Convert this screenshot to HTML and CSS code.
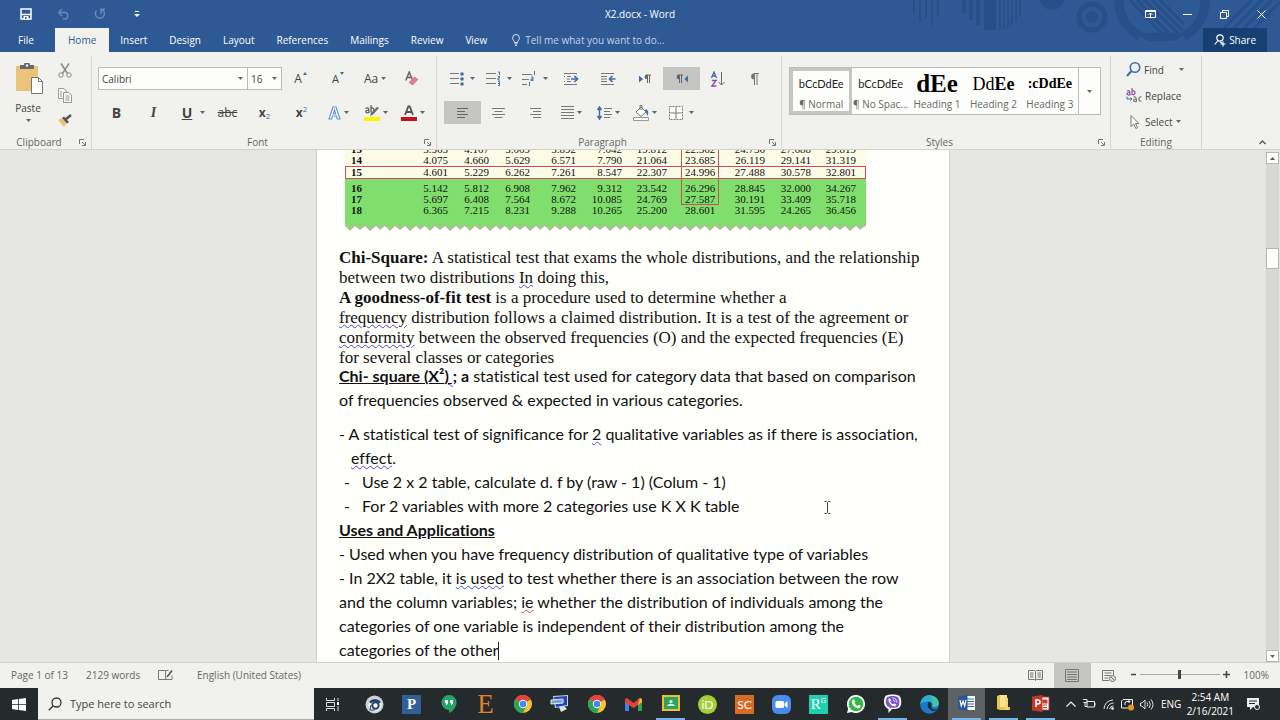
FILE: index.html
```html
<!DOCTYPE html>
<html lang="en">
<head>
<meta charset="utf-8">
<title>X2.docx - Word</title>
<link rel="stylesheet" href="styles.css">
</head>
<body>
<svg class="defs" aria-hidden="true">
  <symbol id="caret" viewBox="0 0 5 3"><path d="M0 0h5L2.500 3z" fill="#666"/></symbol>
  <symbol id="launch" viewBox="0 0 7 7"><path d="M.5 5V.5H5M3 3l3 3M6.500 3v3.500H3" fill="none" stroke="#777"/></symbol>
  <symbol id="chrome" viewBox="0 0 18 18"><circle cx="9" cy="9" r="9" fill="#f4c62c"/><path d="M9 9L1.200 4.500A9 9 0 0 1 16.800 4.500z" fill="#e0443a"/><path d="M9 9L1.200 4.500A9 9 0 0 0 9 18L12.500 11z" fill="#2fa456"/><path d="M9 5h8.200l-.4-.5H9z" fill="#e0443a"/><circle cx="9" cy="9" r="4.200" fill="#fff"/><circle cx="9" cy="9" r="3.300" fill="#4587ee"/></symbol>
</svg>

<header class="top">
  <svg class="art" viewBox="0 0 380 52" aria-hidden="true">
    <g fill="#274f8a">
      <path d="M13 0h2v14h-2zM19 0h2v22h-2zM25 0h2v18h-2zM31 0h2v27h-2zM37 0h2v16h-2z"/>
      <path d="M62 0h4v13h-4zM69 0h4v20h-4zM76 0h4v25h-4zM84 0h12v30h-12zM99 0h2v30h-2zM103 0h2v29h-2zM107 0h2v28h-2zM111 0h2v25h-2zM115 0h2v21h-2zM119 0h2v16h-2z"/>
      <path d="M140 0h24c-2 13-22 13-24 0z"/>
      <circle cx="192" cy="17" r="6"/>
    </g>
    <circle cx="192" cy="17" r="13" fill="none" stroke="#274f8a" stroke-width="5"/>
    <path d="M240 36C222 26 218 10 219-4M284 36C302 26 306 10 305-4" fill="none" stroke="#274f8a" stroke-width="9"/>
    <path d="M236 33h52l-14 8h-26z" fill="#274f8a"/>
    <path d="M230 0l34 36M237 0l34 36M244 0l34 33M252 0l30 30M260 0l24 24" stroke="#274f8a" stroke-width="3"/>
    <path d="M324 28L352 0M334 28L362 0M344 28L372 0M354 28L380 2" stroke="#274f8a" stroke-width="3"/>
  </svg>
  <div class="titlebar">
    <div class="qat">
      <button aria-label="Save"><svg width="12" height="12" viewBox="0 0 12 12"><path d="M1 1h10v10H1zM1 6.500h10" fill="none" stroke="#fff" stroke-width="1.500"/><path d="M3.500 8h5v4h-5z" fill="#fff"/><path d="M5 9h1.500v2H5z" fill="#2e5995"/></svg></button>
      <button aria-label="Undo"><svg width="12" height="12" viewBox="0 0 12 12"><path d="M5 1L1.500 4.500 5 8M2 4.500h5.500a3 3 0 0 1 0 6.500H6" fill="none" stroke="#6488bd" stroke-width="1.500"/></svg></button>
      <button aria-label="Repeat"><svg width="12" height="12" viewBox="0 0 12 12"><path d="M7 1.200A4.600 4.600 0 1 1 2.500 2.500M7 6V1.200h4" fill="none" stroke="#6488bd" stroke-width="1.500"/></svg></button>
      <button aria-label="Customize Quick Access Toolbar"><svg width="6" height="6" viewBox="0 0 6 6"><path d="M1 0h4v1H1zM0 3h6L3 6z" fill="#fff"/></svg></button>
    </div>
    <span class="doc-name">X2.docx - Word</span>
    <div class="window-buttons">
      <button aria-label="Ribbon Display Options"><svg width="11" height="8" viewBox="0 0 11 8"><path d="M.5.5h10v7H.5zM.5 1.500h10M5.500 7V3M3.500 5l2-2 2 2" fill="none" stroke="#fff"/></svg></button>
      <button aria-label="Minimize"><svg width="9" height="9" viewBox="0 0 9 9"><path d="M0 4.500h9" stroke="#fff"/></svg></button>
      <button aria-label="Restore"><svg width="9" height="9" viewBox="0 0 9 9"><path d="M.5 2.500h6v6h-6zM2.500 2V.5h6v6H7" fill="none" stroke="#fff"/></svg></button>
      <button aria-label="Close"><svg width="9" height="9" viewBox="0 0 9 9"><path d="M.5.5l8 8M8.500.5l-8 8" stroke="#fff"/></svg></button>
    </div>
  </div>
  <nav class="tabs">
    <button class="file">File</button>
    <button class="active">Home</button>
    <button>Insert</button>
    <button>Design</button>
    <button>Layout</button>
    <button>References</button>
    <button>Mailings</button>
    <button>Review</button>
    <button>View</button>
    <label class="tell"><svg width="8" height="12" viewBox="0 0 8 12"><path d="M2.500 8.500C2.500 7 .6 6 .6 3.900a3.400 3.400 0 0 1 6.800 0C7.400 6 5.500 7 5.500 8.500zM2.500 9.800h3M3 11.400h2" fill="none" stroke="#dce6f3"/></svg><input type="text" placeholder="Tell me what you want to do..." aria-label="Tell me what you want to do"></label>
    <button class="share"><svg width="12" height="13" viewBox="0 0 12 13"><circle cx="6" cy="4" r="3.200" fill="none" stroke="#fff" stroke-width="1.200"/><path d="M4 6.500L.8 10.500M6 8l2 1M9 7.500v5M6.500 10h5" fill="none" stroke="#fff" stroke-width="1.200"/></svg>Share</button>
  </nav>
</header>

<section class="ribbon" aria-label="Home ribbon">
  <div class="group clipboard">
    <div class="body">
      <button class="paste"><svg width="28" height="32" viewBox="0 0 28 32"><path d="M0 3h22v25H0z" fill="#e9c47a"/><path d="M4 6V2h4a3 3 0 0 1 6 0h4v4z" fill="#6a6a6a"/><circle cx="11" cy="2.500" r="1.200" fill="#f1f2ee"/><path d="M15.500 14.500h7l4 4v12h-11z" fill="#fff" stroke="#777"/><path d="M22.500 14.500v4h4" fill="none" stroke="#777"/></svg><span>Paste</span><svg class="caret"><use href="#caret"/></svg></button>
      <div class="small-stack">
        <button aria-label="Cut"><svg width="14" height="15" viewBox="0 0 14 15"><path d="M3 .5l6.500 10M11 .5L4.500 10.500" stroke="#8a8a8a" stroke-width="1.500"/><circle cx="3" cy="12" r="2.200" fill="none" stroke="#8a8a8a"/><circle cx="11" cy="12" r="2.200" fill="none" stroke="#8a8a8a"/></svg></button>
        <button aria-label="Copy"><svg width="14" height="15" viewBox="0 0 14 15"><path d="M.5.5H6L8.500 3v7.500h-8z" fill="#f6f6f6" stroke="#9a9a9a"/><path d="M5.500 4.500H11L13.500 7v7.500h-8z" fill="#f6f6f6" stroke="#9a9a9a"/><path d="M2 4h2M2 6h2M2 8h2M7.500 8h4M7.500 10h4M7.500 12h4" stroke="#9a9a9a"/></svg></button>
        <button aria-label="Format Painter"><svg width="14" height="13" viewBox="0 0 14 13"><path d="M0 6l4-2 5 5-3 4z" fill="#e9c47a"/><path d="M4 4l2-1.500L11 8 9 9.500z" fill="#555"/><path d="M7.500 5.500L13 1" stroke="#555" stroke-width="2.500"/></svg></button>
      </div>
    </div>
    <div class="caption">Clipboard<button aria-label="Clipboard settings"><svg width="7" height="7"><use href="#launch"/></svg></button></div>
  </div>

  <div class="group font">
    <div class="body rows">
      <div class="row">
        <div class="combo wide"><input type="text" value="Calibri" aria-label="Font"><svg class="caret"><use href="#caret"/></svg></div>
        <div class="combo size"><input type="text" value="16" aria-label="Font size"><svg class="caret"><use href="#caret"/></svg></div>
        <div class="cells four">
          <button class="glyph" aria-label="Grow font">A<svg class="tip" width="4" height="3" viewBox="0 0 4 3"><path d="M0 3h4L2 0z" fill="#3d6cab"/></svg></button>
          <button class="glyph shrink" aria-label="Shrink font">A<svg class="tip" width="4" height="3" viewBox="0 0 4 3"><path d="M0 0h4L2 3z" fill="#3d6cab"/></svg></button>
          <button class="glyph" aria-label="Change case">Aa<svg class="caret"><use href="#caret"/></svg></button>
          <button aria-label="Clear formatting"><svg width="14" height="15" viewBox="0 0 14 15"><path d="M.8 9.500L4.200 1l3.300 8M2 6.500h4.500" fill="none" stroke="#666" stroke-width="1.500"/><path d="M3.500 11.500l6-6 4 3-6 6z" fill="#dc7f93"/></svg></button>
        </div>
      </div>
      <div class="row">
        <div class="cells nine-font">
          <button class="glyph big"><b>B</b></button>
          <button class="glyph big serif"><b><i>I</i></b></button>
          <button class="glyph big under"><u><b>U</b></u><svg class="caret gap"><use href="#caret"/></svg></button>
          <button class="glyph"><s>abc</s></button>
          <button class="glyph"><b>x</b><sub>2</sub></button>
          <button class="glyph"><b>x</b><sup>2</sup></button>
          <button aria-label="Text effects"><svg width="13" height="14" viewBox="0 0 13 14"><path d="M1 13L5 1h3l4 12H9.300L8.500 10h-4l-.9 3zM5.200 8h2.600L6.500 4z" fill="#fff" stroke="#5b93cd" stroke-width="1.100"/></svg><svg class="caret"><use href="#caret"/></svg></button>
          <button aria-label="Text highlight color"><svg width="16" height="16" viewBox="0 0 16 16"><path d="M1.500 3.500c3-1.500 3.500 0 3.500 4-4 1.500-4.500-2.500 0-2.500M7 0v7c4 1.500 4-5 0-4" fill="none" stroke="#555" stroke-width="1.200"/><path d="M15 3L9 9.500 6 11l1-3L13 2z" fill="#666"/><path d="M0 12h16v4H0z" fill="#fdf400"/></svg><svg class="caret"><use href="#caret"/></svg></button>
          <button aria-label="Font color"><svg width="16" height="16" viewBox="0 0 16 16"><path d="M4 10L7.300 1.500h1.400L12 10M5.300 7h5.400" fill="none" stroke="#555" stroke-width="1.800"/><path d="M0 12h16v4H0z" fill="#c8101c"/></svg><svg class="caret"><use href="#caret"/></svg></button>
        </div>
      </div>
    </div>
    <div class="caption">Font<button aria-label="Font settings"><svg width="7" height="7"><use href="#launch"/></svg></button></div>
  </div>

  <div class="group paragraph">
    <div class="body rows">
      <div class="cells nine">
        <button aria-label="Bullets"><svg width="14" height="14" viewBox="0 0 14 14"><path d="M0 1.500h9M0 6.500h9M0 11.500h9" stroke="#777"/><g fill="#3d6cab"><circle cx="12" cy="2" r="1.800"/><circle cx="12" cy="7" r="1.800"/><circle cx="12" cy="12" r="1.800"/></g></svg><svg class="caret list"><use href="#caret"/></svg></button>
        <button aria-label="Numbering"><svg width="15" height="15" viewBox="0 0 15 15"><path d="M0 2.500h10M0 7.500h10M0 12.500h10" stroke="#777"/><path d="M12 1h1.500v3M12 5.500h1.500v1.500H12V9h2M12 10.500h1.500v4H12M12 12.500h1.500" fill="none" stroke="#3d6cab"/></svg><svg class="caret list"><use href="#caret"/></svg></button>
        <button aria-label="Multilevel list"><svg width="15" height="15" viewBox="0 0 15 15"><path d="M0 3.500h10M0 8.500h7M0 13.500h5" stroke="#777"/><path d="M12.500 0v4M9 6h2v3.500H9V8h2M7.500 11v4" fill="none" stroke="#3d6cab"/></svg><svg class="caret list"><use href="#caret"/></svg></button>
        <button aria-label="Decrease indent"><svg width="15" height="12" viewBox="0 0 15 12"><path d="M0 .5h13M0 11.500h13M3 3.500h4M3 6h3M3 8.500h4M0 3.500h1M0 8.500h1" stroke="#777"/><path d="M7 6h6M10.500 3l3 3-3 3" fill="none" stroke="#3d6cab" stroke-width="1.700"/></svg></button>
        <button aria-label="Increase indent"><svg width="15" height="12" viewBox="0 0 15 12"><path d="M0 .5h13M0 11.500h13M0 3.500h6M0 6h6M0 8.500h6" stroke="#777"/><path d="M8.500 6h6M11.500 3l-3 3 3 3" fill="none" stroke="#3d6cab" stroke-width="1.700"/></svg></button>
        <button aria-label="Left-to-right"><svg width="12" height="10" viewBox="0 0 12 10"><path d="M0 1.500L4 5 0 8.500z" fill="#3d6cab"/><path d="M7 1h5M8.500 1v8M10.500 1v8" stroke="#666"/><path d="M8 .5a2.300 2.300 0 0 0 0 4.800z" fill="#666"/></svg></button>
        <button class="on" aria-label="Right-to-left" aria-pressed="true"><svg width="12" height="10" viewBox="0 0 12 10"><path d="M12 1.500L8.500 5 12 8.500z" fill="#3d6cab"/><path d="M2 1h5M3.500 1v8M5.500 1v8" stroke="#666"/><path d="M3 .5a2.300 2.300 0 0 0 0 4.800z" fill="#666"/></svg></button>
        <button aria-label="Sort"><svg width="14" height="16" viewBox="0 0 14 16"><path d="M.5 7L3 1l2.500 6M1.300 5h3.400" fill="none" stroke="#3d6cab" stroke-width="1.300"/><path d="M.8 9.500h4.400L.8 15h4.700" fill="none" stroke="#8a4da0" stroke-width="1.300"/><path d="M10.500 1v13M7.500 11l3 3 3-3" fill="none" stroke="#666"/></svg></button>
        <button aria-label="Show formatting marks"><svg width="9" height="12" viewBox="0 0 9 12"><path d="M3.500.5H9M4.500.5V12M7 .5V12" stroke="#777"/><path d="M4 .5a2.800 2.800 0 0 0 0 5.800z" fill="#777"/></svg></button>
      </div>
      <div class="cells nine">
        <button class="on" aria-label="Align left" aria-pressed="true"><svg width="11" height="10" viewBox="0 0 11 10"><path d="M0 .5h11M0 3.500h8M0 6.500h11M0 9.500h8" stroke="#666"/></svg></button>
        <button aria-label="Center"><svg width="13" height="10" viewBox="0 0 13 10"><path d="M0 .5h13M2.500 3.500h8M0 6.500h13M2.500 9.500h8" stroke="#777"/></svg></button>
        <button aria-label="Align right"><svg width="11" height="10" viewBox="0 0 11 10"><path d="M0 .5h11M3 3.500h8M0 6.500h11M3 9.500h8" stroke="#777"/></svg></button>
        <button aria-label="Justify"><svg width="13" height="13" viewBox="0 0 13 13"><path d="M0 .5h13M0 3.500h13M0 6.500h13M0 9.500h13M0 12.500h13" stroke="#777"/></svg><svg class="caret"><use href="#caret"/></svg></button>
        <button aria-label="Line spacing"><svg width="15" height="14" viewBox="0 0 15 14"><path d="M2.500 2v10M.5 4l2-3 2 3M.5 10l2 3 2-3" fill="none" stroke="#3d6cab" stroke-width="1.500"/><path d="M7 2.500h8M7 5.500h6M7 8.500h8M7 11.500h6" stroke="#777"/></svg><svg class="caret"><use href="#caret"/></svg></button>
        <button aria-label="Shading"><svg width="16" height="16" viewBox="0 0 16 16"><path d="M3 7l5-5 5 5-5 4.500z" fill="#fff" stroke="#777"/><path d="M7 5V.5h2V5" fill="none" stroke="#777"/><path d="M13 4c3 2 2.500 5 1.500 7-1-2-.5-3-2.500-5z" fill="#3d6cab"/><path d="M.5 12.500h15v3H.5z" fill="#fff" stroke="#999"/></svg><svg class="caret"><use href="#caret"/></svg></button>
        <button aria-label="Borders"><svg width="14" height="14" viewBox="0 0 14 14"><path d="M.5.5h13v13H.5z" fill="#fff" stroke="#777" stroke-dasharray="2 1"/><path d="M7 1v12M1 7h12" stroke="#777"/></svg><svg class="caret list"><use href="#caret"/></svg></button>
      </div>
    </div>
    <div class="caption">Paragraph<button aria-label="Paragraph settings"><svg width="7" height="7"><use href="#launch"/></svg></button></div>
  </div>

  <div class="group styles">
    <div class="body">
      <div class="gallery">
        <button class="chosen"><span class="sample">bCcDdEe</span><span>¶ Normal</span></button>
        <button><span class="sample">bCcDdEe</span><span>¶ No Spac...</span></button>
        <button><span class="sample h1">dEe</span><span>Heading 1</span></button>
        <button><span class="sample h2">Dd<b>Ee</b></span><span>Heading 2</span></button>
        <button><span class="sample h3">:cDdEe</span><span>Heading 3</span></button>
        <button class="more" aria-label="More styles"><svg class="caret"><use href="#caret"/></svg></button>
      </div>
    </div>
    <div class="caption">Styles<button aria-label="Styles settings"><svg width="7" height="7"><use href="#launch"/></svg></button></div>
  </div>

  <div class="group editing">
    <div class="body">
      <button><svg width="15" height="15" viewBox="0 0 15 15"><circle cx="9" cy="5.500" r="4.700" fill="none" stroke="#3d6cab" stroke-width="1.600"/><path d="M5.500 9L1 14" stroke="#3d6cab" stroke-width="2"/></svg>Find<svg class="caret far"><use href="#caret"/></svg></button>
      <button><svg width="16" height="15" viewBox="0 0 16 15"><path d="M1 3c2-1 3 0 3 4-4 .5-4-2.500 0-2.500M6 0v6.500c4 1 4-4.500 0-3.500" fill="none" stroke="#8a4da0" stroke-width="1.200"/><path d="M1 8.500V11h5M4.500 9.500L6 11l-1.500 1.500" fill="none" stroke="#3d6cab"/><path d="M7.500 9c2-.5 3 0 3 4.500-4 .5-4-2.500 0-2.500M15.500 9c-3.500-1-3.500 5 0 4" fill="none" stroke="#777" stroke-width="1.200"/></svg>Replace</button>
      <button><svg width="16" height="14" viewBox="0 0 16 14"><path d="M5 .5v11l2.800-2.500 2 4.500 1.700-.8-2-4.200h3.300z" fill="#fff" stroke="#777"/></svg>Select<svg class="caret"><use href="#caret"/></svg></button>
    </div>
    <div class="caption">Editing</div>
  </div>
  <button class="collapse" aria-label="Collapse the ribbon"><svg width="7" height="5" viewBox="0 0 7 5"><path d="M.5 4l3-3 3 3" fill="none" stroke="#555" stroke-width="1.400"/></svg></button>
</section>

<main class="workspace">
  <article class="page">
    <div class="figure">
      <table>
        <colgroup><col class="c-df"><col class="c-a"><col class="c-a"><col class="c-b"><col class="c-b"><col class="c-wide"><col class="c-mark"><col class="c-b"><col class="c-b"><col class="c-last"></colgroup>
        <tbody class="cream">
          <tr><th><span>13</span>3.565</th><td>4.107</td><td>5.009</td><td>5.892</td><td>7.042</td><td>19.812</td><td class="mark">22.362</td><td>24.736</td><td>27.688</td><td>29.819</td></tr>
          <tr><th><span>14</span>4.075</th><td>4.660</td><td>5.629</td><td>6.571</td><td>7.790</td><td>21.064</td><td class="mark">23.685</td><td>26.119</td><td>29.141</td><td>31.319</td></tr>
          <tr class="boxed"><th><span>15</span>4.601</th><td>5.229</td><td>6.262</td><td>7.261</td><td>8.547</td><td>22.307</td><td class="mark">24.996</td><td>27.488</td><td>30.578</td><td>32.801</td></tr>
        </tbody>
        <tbody class="green">
          <tr class="first"><th><span>16</span>5.142</th><td>5.812</td><td>6.908</td><td>7.962</td><td>9.312</td><td>23.542</td><td class="mark">26.296</td><td>28.845</td><td>32.000</td><td>34.267</td></tr>
          <tr><th><span>17</span>5.697</th><td>6.408</td><td>7.564</td><td>8.672</td><td>10.085</td><td>24.769</td><td class="mark end">27.587</td><td>30.191</td><td>33.409</td><td>35.718</td></tr>
          <tr><th><span>18</span>6.365</th><td>7.215</td><td>8.231</td><td>9.288</td><td>10.265</td><td>25.200</td><td class="plain">28.601</td><td>31.595</td><td>24.265</td><td>36.456</td></tr>
        </tbody>
      </table>
      <svg class="torn" viewBox="0 0 521 16" preserveAspectRatio="none" aria-hidden="true"><defs><pattern id="tear" width="40" height="16" patternUnits="userSpaceOnUse"><path d="M0 0h40v10l-5 4-4-4-6 5-5-5-5 4-5-4-5 5-5-5z" fill="#b9b5a0"/><path d="M0 0h40v8l-5 4-4-4-6 5-5-5-5 4-5-4-5 5-5-5z" fill="#80df6c"/></pattern></defs><path d="M0 0h521v16H0z" fill="url(#tear)"/></svg>
    </div>

    <div class="serif-text">
      <p><b>Chi-Square:</b> A statistical test that exams the whole distributions, and the relationship<br>between two distributions <span class="gram">In</span> doing this,</p>
      <p><b>A goodness-of-fit test</b> is a procedure used to determine whether a<br><span class="gram">frequency</span> distribution follows a claimed distribution. It is a test of the agreement or<br><span class="gram">conformity</span> between the observed frequencies (O) and the expected frequencies (E)<br>for several classes or categories</p>
    </div>
    <div class="sans-text">
      <p class="spaced"><b><u>Chi- square (X²<span class="gram">) ;</span></u> a</b> statistical test used for category data that based on comparison<br>of frequencies observed &amp; expected in various categories.</p>
      <p class="hang">- A statistical test of significance for <span class="gram">2</span> qualitative variables as if there is association,<br><span class="gram">effect</span>.</p>
      <ul>
        <li>Use 2 x 2 table, calculate d. f by (raw - 1) (Colum - 1)</li>
        <li>For 2 variables with more 2 categories use K X K table</li>
      </ul>
      <h2>Uses and Applications</h2>
      <p>- Used when you have frequency distribution of qualitative type of variables</p>
      <p>- In 2X2 table, it <span class="gram">is used</span> to test whether there is an association between the row<br>and the column variables; <span class="spell">ie</span> whether the distribution of individuals among the<br>categories of one variable is independent of their distribution among the<br>categories of the other<span class="cursor"></span></p>
    </div>
    <svg class="ibeam" width="7" height="13" viewBox="0 0 7 13" aria-hidden="true"><path d="M.5.5h2l1 1 1-1h2M3.500 1.500v10M.5 12.500h2l1-1 1 1h2" fill="none" stroke="#444"/></svg>
  </article>
  <div class="scrollbar">
    <button aria-label="Scroll up"><svg width="5" height="3" viewBox="0 0 5 3"><path d="M0 3h5L2.500 0z" fill="#555"/></svg></button>
    <div class="track"><div class="thumb"></div></div>
    <button aria-label="Scroll down"><svg width="5" height="3"><use href="#caret"/></svg></button>
  </div>
</main>

<footer class="status">
  <span class="s-page">Page 1 of 13</span>
  <span class="s-words">2129 words</span>
  <button class="s-proof" aria-label="Proofing"><svg width="15" height="12" viewBox="0 0 15 12"><path d="M7 1.500H.5v9H7l.5.5.5-.5h6v-4M7.500 1.500V11M7.500 1.500h3" fill="none" stroke="#777"/><path d="M9 8l5-6.500" stroke="#555" stroke-width="1.600"/></svg></button>
  <span>English (United States)</span>
  <div class="views">
    <button aria-label="Read Mode"><svg width="15" height="11" viewBox="0 0 15 11"><path d="M.5.5h6l1 1 1-1h6v9h-6l-1 1-1-1h-6zM7.500 1v9M2 3h3.500M2 5h3.500M2 7h3.500M9.500 3H13M9.500 5H13M9.500 7H13" fill="none" stroke="#777"/></svg></button>
    <button class="on" aria-label="Print Layout" aria-pressed="true"><svg width="14" height="13" viewBox="0 0 14 13"><path d="M.5.5h13v12H.5zM2 3h10M2 5.500h10M2 8h10M2 10.500h10" fill="none" stroke="#777"/></svg></button>
    <button aria-label="Web Layout"><svg width="14" height="12" viewBox="0 0 14 12"><path d="M7 10.500H.5V.5h11V5M2.500 3h7M2.500 5.500h6M2.500 8h4" fill="none" stroke="#777"/><circle cx="10.500" cy="8.500" r="3" fill="#ddd" stroke="#777"/><path d="M9 7l3 3" stroke="#777"/></svg></button>
  </div>
  <div class="zoom">
    <button aria-label="Zoom out"><svg width="7" height="7" viewBox="0 0 7 7"><path d="M1 3.500h5" stroke="#444" stroke-width="1.500"/></svg></button>
    <input type="range" min="10" max="190" value="100" aria-label="Zoom">
    <button aria-label="Zoom in"><svg width="7" height="7" viewBox="0 0 7 7"><path d="M0 3.500h7M3.500 0v7" stroke="#444" stroke-width="1.500"/></svg></button>
    <span class="percent">100%</span>
  </div>
</footer>

<nav class="taskbar">
  <button class="start" aria-label="Start"><svg width="14" height="13" viewBox="0 0 14 13"><path d="M0 2l6-1v5H0zM6.800.9L14 0v6H6.800zM0 6.800h6V12l-6-1zM6.800 6.800H14V13l-7.200-1z" fill="#fff"/></svg></button>
  <label class="search"><svg width="14" height="14" viewBox="0 0 14 14"><circle cx="8.500" cy="5.500" r="4.500" fill="none" stroke="#333" stroke-width="1.300"/><path d="M5.300 8.700L.8 13.200" stroke="#333" stroke-width="1.300"/></svg><input type="text" placeholder="Type here to search" aria-label="Type here to search"></label>
  <button class="view" aria-label="Task View"><svg width="14" height="13" viewBox="0 0 14 13"><path d="M.5 0v2.500h8V0M.5 13v-2.500h8V13M.5 4.500h8v4h-8zM12 0v3M12 8v5" fill="none" stroke="#ddd"/><path d="M11 4h2v3h-2z" fill="#fff"/></svg></button>
  <div class="apps">
    <button aria-label="Phone"><svg width="19" height="19" viewBox="0 0 19 19"><circle cx="9.500" cy="9.500" r="9" fill="#cdd0cf"/><circle cx="10" cy="10" r="6.500" fill="#f4f4f4"/><path d="M4 7c3-4 9-4 12 0l-2 1.500-2-1.500H8L6 8.500z" fill="#26426e"/><circle cx="10.500" cy="10.500" r="3.200" fill="#fff" stroke="#26426e" stroke-width="2"/><path d="M6 10l-1 5h5" fill="none" stroke="#26426e"/></svg></button>
    <button aria-label="Pandora"><span class="tile p">P</span></button>
    <button aria-label="Hangouts"><svg width="16" height="18" viewBox="0 0 16 18"><path d="M8 0a7.500 7.500 0 0 1 7.600 7.500C15.600 12 12 16 8 18v-3A7.500 7.500 0 1 1 8 0z" fill="#25a566"/><path d="M4 5h3v3.500L5 10.500V8H4zM9 5h3v3.500l-2 2V8H9z" fill="#fff"/></svg></button>
    <button aria-label="E-Prime"><span class="e">E</span></button>
    <button aria-label="Chrome"><svg width="18" height="18"><use href="#chrome"/></svg></button>
    <button aria-label="Remote Desktop"><svg width="20" height="18" viewBox="0 0 20 18"><path d="M3 1l15-1v11L5 13z" fill="#c9d2de"/><path d="M4 2l13-1v9L6 12z" fill="#2444b8"/><path d="M1 5l12-1v4L1 9z" fill="#6fa2e8" stroke="#eee"/><path d="M9 12l5-1 3 3-6 3z" fill="#dde2ea"/></svg></button>
    <button aria-label="Chrome profile"><svg width="18" height="18"><use href="#chrome"/></svg></button>
    <button aria-label="Gmail"><svg width="17" height="13" viewBox="0 0 17 13"><path d="M0 2h4v11H1q-1 0-1-1z" fill="#4285e8"/><path d="M13 2h4v10q0 1-1 1h-3z" fill="#32a552"/><path d="M13 1l2-1q2 0 2 2v2l-4 3z" fill="#f3bd2d"/><path d="M0 2q0-2 2-2l6.500 5L15 0l-2 7-4.500 3L4 7 0 4z" fill="#e0443a"/></svg></button>
    <button class="open" aria-label="Classroom"><svg width="18" height="16" viewBox="0 0 18 16"><path d="M1 1h16v14H1z" fill="#2aa463" stroke="#efbe33" stroke-width="2"/><circle cx="9" cy="6.500" r="1.500" fill="#fff"/><path d="M5 11c1-3 7-3 8 0z" fill="#d7f0e0"/></svg></button>
    <button aria-label="ORCID"><span class="tile orcid">iD</span></button>
    <button aria-label="Scopus"><span class="tile sc">SC</span></button>
    <button aria-label="Zoom"><svg width="19" height="19" viewBox="0 0 19 19"><rect width="19" height="19" rx="6" fill="#4a8cec"/><rect x="3.500" y="6" width="8.500" height="7" rx="1.500" fill="#fff"/><path d="M12.500 8.500L15.500 6v7l-3-2.500z" fill="#fff"/></svg></button>
    <button aria-label="ResearchGate"><span class="tile rg">R<sup>G</sup></span></button>
    <button aria-label="WhatsApp"><svg width="18" height="18" viewBox="0 0 18 18"><path d="M9 0a9 9 0 1 1-4.300 16.900L0 18l1.200-4.500A9 9 0 0 1 9 0z" fill="#fff"/><circle cx="9" cy="9" r="7.300" fill="#2fb944"/><path d="M5.500 5l1.500-.8 1.300 2.500-1 1c.8 1.600 1.800 2.500 3.300 3.200l1-1.100 2.200 1.200c-.3 2-2 2.700-4 1.900-2.500-1-5-4-5-6z" fill="#fff"/></svg></button>
    <button class="open" aria-label="Viber"><svg width="19" height="19" viewBox="0 0 19 19"><path d="M3 1.500C6 0 13 0 16 1.500c3 3 3 10 0 12.500-2 1-5 1-7 1l-3.500 4v-4C0 13 0 4.500 3 1.500z" fill="#fff"/><path d="M4 3c3-1.500 8-1.500 11 0 2 3 2 7 0 10-3 1-5 1-7 .8L6.500 15v-2C2 12 2 6 4 3z" fill="#7b58c4"/><path d="M5.500 5l1.300-.8 1.300 2-1 1.200c.8 1.600 1.800 2.300 3 2.800l1.200-.8 2 1.400c-.4 1.700-1.600 2-3.200 1.300-2.500-1-4.800-4-4.600-7.100z" fill="#fff"/><path d="M9.500 4c3 0 4.500 2 4.500 4.500M10 6c1.500.2 2 1 2 2" fill="none" stroke="#fff" stroke-width=".8"/></svg></button>
    <button aria-label="Edge"><svg width="19" height="19" viewBox="0 0 19 19"><circle cx="9.500" cy="9.500" r="9.300" fill="#1a78c8"/><path d="M.5 9C1 3.500 5 .2 9.800.2 15 .2 19 4 18.800 8.500c-.1 3.300-4.800 4.500-6.800 2.800 1.500-2 0-5-3-5C5.500 6.300 2 7 .5 9z" fill="#45c7a0"/><path d="M.5 9C1 3.500 5 .2 9.800.2 12 2 13 5 12 7.500 10 5 3 5 .5 9z" fill="#2cacd8"/><path d="M9 7c-3 2.500-1 8.500 5 9 2 0 3-.8 4-2-2 1-7 1-6.500-3C11.800 9 10.500 7 9 7z" fill="#252b2d"/></svg></button>
    <button class="open current" aria-label="Word"><svg width="17" height="16" viewBox="0 0 17 16"><path d="M8 1h9v14H8z" fill="#fff"/><path d="M9 4h7M9 6.500h7M9 9h7M9 11.500h7" stroke="#3564a8"/><path d="M0 1.500L9.500 0v16L0 14.500z" fill="#2a5699"/><path d="M2 5l1.300 6L5 6l1.700 5L8 5" fill="none" stroke="#fff" stroke-width="1.200"/></svg></button>
    <button class="open" aria-label="File Explorer"><svg width="13" height="16" viewBox="0 0 13 16"><path d="M2 0h8v12H2z" fill="#f8e497"/><path d="M0 1l3-1v15l-3-1zM3 12h10v3H3z" fill="#eec34b"/><path d="M8 3h3v12H8z" fill="#f5d672"/></svg></button>
    <button class="open" aria-label="PowerPoint"><svg width="18" height="17" viewBox="0 0 18 17"><path d="M9 2h8v13H9z" fill="#fff" stroke="#c43b2d"/><path d="M11 5h4v3h-4zM11 10h4M11 12.500h4" fill="#c43b2d" stroke="#c43b2d"/><path d="M0 1.500L10.500 0v17L0 15.500z" fill="#c3372b"/><path d="M4 12V5h2a2 2 0 0 1 0 4H4" fill="none" stroke="#fff" stroke-width="1.600"/></svg></button>
  </div>
  <div class="tray">
    <button aria-label="Show hidden icons"><svg width="10" height="6" viewBox="0 0 10 6"><path d="M.5 5.500L5 1l4.500 4.500" fill="none" stroke="#eee" stroke-width="1.200"/></svg></button>
    <button aria-label="Battery"><svg width="13" height="10" viewBox="0 0 13 10"><path d="M4 2.500h7.500V8H4zM12 4v2.500M0 .5h4v3H.5M2 4v3.500h2" fill="none" stroke="#eee"/></svg></button>
    <button aria-label="Network"><svg width="11" height="11" viewBox="0 0 11 11"><path d="M1 10A9 9 0 0 1 10 1M4 10a6.500 6.500 0 0 1 6.500-6M6.500 10A4 4 0 0 1 10.500 7" fill="none" stroke="#ddd"/><circle cx="9.500" cy="9.500" r="1.300" fill="#fff"/></svg></button>
    <button aria-label="Update"><svg width="14" height="13" viewBox="0 0 14 13"><path d="M11.500 7V1.500H2L.5 3v7H7M4 7V5q0-1.500 2-1.500h3M7.500 2L9 3.500 7.500 5" fill="none" stroke="#eee"/><circle cx="10" cy="9.500" r="3" fill="#f0951e"/></svg></button>
    <button aria-label="Volume"><svg width="14" height="11" viewBox="0 0 14 11"><path d="M.5 4H2l3-3v9L2 7H.5zM7 3.500q1.500 2 0 4M9 2q2.800 3.500 0 7M11 .5q4 5 0 10" fill="none" stroke="#ddd"/></svg></button>
    <span class="lang">ENG</span>
    <span class="clock">2:54 AM<br>2/16/2021</span>
    <button class="notes" aria-label="Notifications"><svg width="14" height="13" viewBox="0 0 14 13"><path d="M0 0h12v9H6l-3 3V9H0z" fill="#eee"/><path d="M2 3h8M2 5.500h6" stroke="#252b2d"/><circle cx="10" cy="9" r="2.500" fill="#252b2d" stroke="#eee"/></svg></button>
  </div>
</nav>
</body>
</html>
```

FILE: styles.css
```css
* { box-sizing: border-box; }

body {
  margin: 0;
  height: 100vh;
  display: flex;
  flex-direction: column;
  overflow: hidden;
  font: 10px/14px "Open Sans", "Noto Sans", sans-serif;
  color: #444;
  background: #e6e7e4;
}

button, input {
  font: inherit;
  color: inherit;
  background: none;
  border: 0;
  padding: 0;
  margin: 0;
}
button { display: flex; align-items: center; justify-content: center; white-space: nowrap; }
input { min-width: 0; outline: 0; }
svg { display: block; flex: none; }
p, h2, ul { margin: 0; padding: 0; }
.defs { display: none; }
.caret { width: 5px; height: 3px; margin-left: 3px; }
.caret.list { margin-left: 6px; }

/* Title bar and tabs */
.top { position: relative; background: #2e5995; color: #fff; flex: none; }
.art { position: absolute; top: 0; right: 0; width: 380px; height: 52px; }
.titlebar { position: relative; display: grid; grid-template-columns: 1fr auto 1fr; height: 28px; align-items: center; }
.qat { display: flex; padding-left: 7px; height: 24px; }
.qat button { width: 37px; }
.window-buttons { display: flex; justify-content: flex-end; height: 24px; }
.window-buttons button { width: 37px; }
.tabs { position: relative; display: flex; height: 24px; }
.tabs > button { padding: 0 11px; }
.tabs > .file { width: 55px; padding-right: 14px; }
.tabs > .active { padding: 0 13px; background: #f1f2ee; color: #2e5995; }
.tell { display: flex; align-items: center; gap: 5px; flex: 1; padding-left: 14px; }
.tell input { flex: 1; }
.tell input::placeholder { color: #c3d2e8; opacity: 1; }
.tabs > .share { background: #173f73; gap: 3px; margin-right: 13px; }

/* Ribbon */
.ribbon { display: flex; flex: none; height: 98px; padding-top: 4px; background: #f1f2ee; border-bottom: 1px solid #d2d3d0; }
.group { display: flex; flex-direction: column; border-right: 1px solid #d6d7d4; }
.group .body { flex: 1; }
.caption { position: relative; text-align: center; color: #666; height: 14px; padding-right: 13px; }
.caption button { position: absolute; right: 5px; top: 4px; }
.clipboard { width: 92px; }
.clipboard .body { display: flex; padding: 7px 0 0 10px; gap: 5px; }
.paste { flex-direction: column; justify-content: flex-start; width: 36px; }
.paste svg:first-child { margin-left: 4px; }
.paste span { margin-top: 6px; }
.paste .caret { margin: 4px 0 0; }
.small-stack { display: flex; flex-direction: column; gap: 10px; width: 28px; align-items: center; }
.small-stack button { height: 15px; }
.rows { display: flex; flex-direction: column; gap: 11px; padding-top: 11px; }
.row { display: flex; }
.font { width: 345px; padding: 0; }
.font .rows { padding-left: 6px; padding-right: 5px; }
.combo { display: flex; align-items: center; height: 23px; border: 1px solid #bbb; background: #fdfefb; padding: 0 4px 0 3px; }
.combo input { flex: 1; }
.combo.wide { width: 150px; }
.combo.size { width: 35px; margin-left: -1px; }
.cells { display: grid; flex: 1; }
.cells button { height: 23px; }
.four { grid-template-columns: repeat(4, 1fr); }
.nine-font { grid-template-columns: repeat(9, 1fr); }
.glyph { font-size: 12px; position: relative; }
.glyph .tip { margin: -10px 0 0 1px; }
.shrink { font-size: 11px; }
.big { font-size: 14px; }
.serif { font-family: "Liberation Serif", serif; }
.cells .under { padding-left: 6px; }
.caret.gap { margin-left: 8px; }
.glyph sub, .glyph sup { font-size: 8px; line-height: 8px; color: #3d6cab; }
.glyph sub { margin-top: 6px; }
.glyph sup { margin-top: -8px; }
.paragraph { width: 345px; }
.paragraph .rows { padding-left: 7px; padding-right: 8px; }
.paragraph .cells { flex: none; }
.nine { grid-template-columns: repeat(9, 1fr); }
.on { background: #c5c6c2; }
.styles { width: 329px; }
.styles .body { padding: 11px 9px 0 7px; }
.gallery { display: flex; height: 48px; border: 1px solid #bbb; background: #fdfefb; }
.gallery button { flex: 1; min-width: 0; flex-direction: column; justify-content: flex-end; padding-bottom: 3px; color: #666; }
.gallery .chosen { border: 3px solid #c5c6c2; padding-bottom: 0; }
.gallery .more { flex: none; width: 22px; padding: 0; border-left: 1px solid #bbb; justify-content: center; }
.gallery .more .caret { margin: 0; }
.sample { font: 11px/16px Lato, sans-serif; color: #222; height: 21px; }
.sample.h1, .sample.h2, .sample.h3 { font-family: "Liberation Serif", serif; color: #000; }
.sample.h1 { font-size: 25px; font-weight: bold; }
.sample.h2 { font-size: 18px; }
.sample.h3 { font-size: 14px; font-weight: bold; }
.editing { width: 91px; }
.editing .body { display: flex; flex-direction: column; align-items: flex-start; gap: 11px; padding: 6px 0 0 15px; }
.editing .body button { height: 15px; gap: 3px; }
.editing .caption { padding-right: 0; }
.editing .caret { margin: 0; }
.editing .caret.far { margin-left: 12px; }
.collapse { margin: auto 14px 4px auto; }

/* Document */
.workspace { flex: 1; min-height: 0; display: flex; overflow: hidden; }
.page { position: relative; width: 634px; margin: 0 auto; border: 1px solid #d0d1ce; border-width: 0 1px; background: #fefefb; color: #111; padding-left: 22px; white-space: nowrap; }
.figure { width: 521px; margin: -6px 0 0 6px; }
.figure table { width: 521px; border-spacing: 0; table-layout: fixed; font: 11px/11px "Liberation Serif", serif; }
.figure td, .figure th { padding: 0; text-align: right; font-weight: normal; }
.figure th { padding-left: 6px; }
.figure th span { float: left; font-weight: bold; }
.c-df { width: 103px; }
.c-a { width: 41px; }
.c-b { width: 46px; }
.c-wide { width: 59px; }
.c-mark { width: 38px; }
.c-last { width: 55px; }
.figure td:nth-child(6) { padding-right: 14px; }
.figure td:last-child { padding-right: 10px; }
.cream { background: #fcfbe6; }
.green { background: #80df6c; }
.figure .mark { text-align: center; border: 1px solid #c0584c; border-width: 0 1px; }
.figure .plain { text-align: center; }
.figure .end { box-shadow: inset 0 -1px #c0584c; }
.boxed td, .boxed th { border-top: 1px solid #c9486a; border-bottom: 1px solid #c9486a; }
.boxed th { border-left: 1px solid #c9486a; }
.figure .boxed th { padding-left: 5px; }
.boxed td:last-child { border-right: 1px solid #c9486a; }
.figure .boxed td:last-child { padding-right: 9px; }
.figure .boxed .mark { border-width: 1px; }
.first td, .first th { padding-top: 4px; }
.torn { width: 100%; height: 16px; }
.serif-text { margin-top: 16px; font: 17px/20px "Liberation Serif", serif; }
.sans-text { margin-top: -4px; font: 16px/24px Lato, sans-serif; font-variant-ligatures: none; }
.spaced { margin-bottom: 10px; }
.hang { padding-left: 12px; text-indent: -12px; }
.sans-text ul { list-style: none; }
.sans-text li { padding-left: 5px; }
.sans-text li::before { content: "-"; display: inline-block; width: 18px; }
.sans-text h2 { font: inherit; font-weight: bold; text-decoration: underline; }
.gram { text-decoration: underline wavy #4a4ad0 1px; }
.spell { text-decoration: underline wavy #d04050 1px; }
.cursor { display: inline-block; width: 1px; height: 18px; background: #222; vertical-align: -4px; }
.ibeam { position: absolute; left: 507px; top: 351px; }
.scrollbar { flex: none; width: 14px; border-right: 1px solid #e6e7e4; margin-top: 2px; display: flex; flex-direction: column; background: #d8d9d6; }
.scrollbar button { height: 12px; background: #fdfefb; border: 1px solid #b5b6b3; }
.track { flex: 1; padding-top: 84px; }
.thumb { height: 21px; background: #fdfefb; border: 1px solid #b5b6b3; }

/* Status bar */
.status { flex: none; display: flex; align-items: center; height: 26px; padding: 0 0 2px 11px; background: #f1f2ee; border-top: 1px solid #d0d1ce; color: #666; }
.s-page { width: 75px; }
.s-words { width: 72px; }
.s-proof { width: 15px; margin-right: 24px; }
.views { display: flex; align-self: stretch; margin: 0 0 -2px auto; }
.views button { width: 37px; }
.zoom { display: flex; align-items: center; padding: 0 11px 0 2px; }
.zoom input { width: 80px; height: 11px; margin: 0 3px; appearance: none; background: linear-gradient(#aaa, #aaa) center / 100% 1px no-repeat; }
.zoom input::-webkit-slider-thumb { appearance: none; width: 3px; height: 9px; background: #444; }
.percent { margin-left: 14px; }

/* Taskbar */
.taskbar { flex: none; display: flex; height: 32px; background: #252b2d; color: #fff; }
.start { width: 38px; }
.search { display: flex; align-items: center; gap: 8px; width: 276px; padding-left: 10px; background: #f1f2ee; color: #444; border-bottom: 1px solid #aaa; }
.search input { flex: 1; font-size: 11px; }
.search input::placeholder { color: #444; opacity: 1; }
.view { width: 42px; padding-right: 4px; }
.apps { display: flex; }
.apps button { width: 37px; }
.apps .open { border-bottom: 2px solid #76b5e8; border-image: linear-gradient(90deg, transparent 4px, #76b5e8 4px, #76b5e8 33px, transparent 33px) 0 0 2; }
.apps .current { background: #5c6163; }
.tile { width: 19px; height: 19px; font: 15px/19px "Liberation Serif", serif; text-align: center; }
.tile.p { background: #2f6196; font-weight: bold; }
.tile.orcid { background: #a5cf38; border-radius: 50%; font: 12px/19px Lato, sans-serif; }
.tile.sc { background: #d96a26; font: 12px/19px Lato, sans-serif; }
.tile.rg { background: #1fd0ae; }
.tile sup { font: 7px/7px "Liberation Sans", sans-serif; }
.e { font: 27px/27px "Liberation Serif", serif; color: #e07f2a; }
.tray { display: flex; align-items: center; flex: 1; padding-left: 2px; }
.tray button { width: 19px; }
.lang { margin-left: 5px; }
.clock { margin-left: auto; text-align: center; }
.tray .notes { margin: 0 17px 0 10px; }
```
